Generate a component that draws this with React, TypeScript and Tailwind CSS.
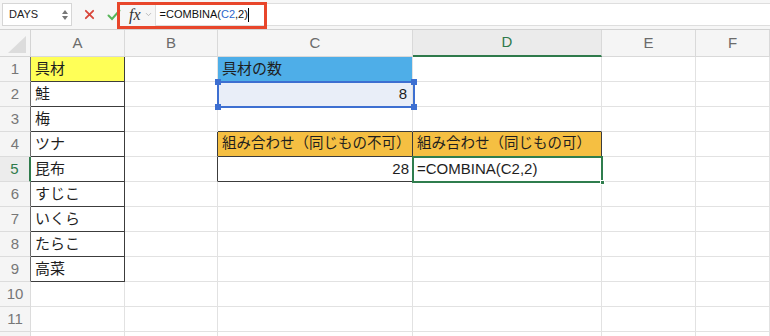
import { ChevronDown } from 'lucide-react'

const FONT = 'font-["Liberation_Sans","Noto_Sans_CJK_JP",sans-serif]'

const COLS = ['A', 'B', 'C', 'D', 'E', 'F']
const ROWS = [1, 2, 3, 4, 5, 6, 7, 8, 9, 10, 11, 12]

type Cell = { text?: string; cls?: string; small?: boolean }

// cell-level overrides: fills, dark borders, alignment
const CELLS: Record<string, Cell> = {
  A1: { text: '具材', cls: 'bg-[#ffff57] border-r-[#3c3c3c] border-b-[#3c3c3c]' },
  A2: { text: '鮭', cls: 'border-r-[#3c3c3c] border-b-[#3c3c3c]' },
  A3: { text: '梅', cls: 'border-r-[#3c3c3c] border-b-[#3c3c3c]' },
  A4: { text: 'ツナ', cls: 'border-r-[#3c3c3c] border-b-[#3c3c3c]' },
  A5: { text: '昆布', cls: 'border-r-[#3c3c3c] border-b-[#3c3c3c]' },
  A6: { text: 'すじこ', cls: 'border-r-[#3c3c3c] border-b-[#3c3c3c]' },
  A7: { text: 'いくら', cls: 'border-r-[#3c3c3c] border-b-[#3c3c3c]' },
  A8: { text: 'たらこ', cls: 'border-r-[#3c3c3c] border-b-[#3c3c3c]' },
  A9: { text: '高菜', cls: 'border-r-[#3c3c3c] border-b-[#3c3c3c]' },
  B4: { cls: 'border-r-[#3c3c3c]' },
  B5: { cls: 'border-r-[#3c3c3c]' },
  C1: { text: '具材の数', cls: 'bg-[#4eaee8]' },
  C2: { text: '8', cls: 'bg-[#e9eef8] justify-end pr-[5px]' },
  C3: { cls: 'border-b-[#3c3c3c]' },
  D3: { cls: 'border-b-[#3c3c3c]' },
  C4: { text: '組み合わせ（同じもの不可）', small: true, cls: 'bg-[#f5bf42] border-r-[#3c3c3c] border-b-[#3c3c3c]' },
  D4: { text: '組み合わせ（同じもの可）', small: true, cls: 'bg-[#f5bf42] border-r-[#3c3c3c] border-b-[#3c3c3c]' },
  C5: { text: '28', cls: 'justify-end pr-[3px] border-r-[#3c3c3c] border-b-[#3c3c3c]' },
  D5: { text: '=COMBINA(C2,2)', cls: 'border-r-[#3c3c3c] border-b-[#3c3c3c]' },
}

function FormulaBar() {
  return (
    <div className="relative h-[30px] bg-[#f6f6f6] border-b border-[#d2d2d2] flex items-center">
      <div className="ml-[2px] w-[70px] h-[23px] bg-white border border-[#d6d6d6] flex items-center justify-between pl-[6px] pr-[3px]">
        <span className="text-[11px] text-[#222]">DAYS</span>
        <span className="flex flex-col gap-[2px]">
          <span className="w-0 h-0 border-x-[3px] border-x-transparent border-b-[4px] border-b-[#777]" />
          <span className="w-0 h-0 border-x-[3px] border-x-transparent border-t-[4px] border-t-[#777]" />
        </span>
      </div>
      <svg className="ml-[12px]" width="11" height="11" viewBox="0 0 12 12">
        <path d="M2 2 L10 10 M10 2 L2 10" stroke="#d9463b" strokeWidth="2" strokeLinecap="round" />
      </svg>
      <svg className="ml-[12px]" width="14" height="12" viewBox="0 0 14 12">
        <path d="M1.5 6.5 L5 10 L12.5 1.5" stroke="#58b55a" strokeWidth="2" fill="none" strokeLinecap="round" />
      </svg>
      <span className="ml-[8px] font-['Liberation_Serif',serif] italic text-[16px] text-[#333] leading-none">fx</span>
      <ChevronDown size={9} className="ml-[3px] text-[#aaa]" />
      <div className="ml-[2px] flex-1 h-[23px] bg-white border-l border-y border-[#dedede] flex items-center pl-[4px] text-[11px] text-[#111]">
        <span>=COMBINA(</span>
        <span className="text-[#2d66cc]">C2</span>
        <span>,2)</span>
        <span className="w-px h-[14px] bg-black" />
      </div>
      <div className="absolute left-[117px] top-[2px] w-[150px] h-[27px] border-[3px] border-[#e8462b]" />
    </div>
  )
}

function Handle({ cls }: { cls: string }) {
  return <div className={`absolute w-[6px] h-[6px] bg-[#3d6fd1] ${cls}`} />
}

export default function App() {
  return (
    <div className={`w-[770px] h-[336px] overflow-hidden bg-white ${FONT}`}>
      <FormulaBar />
      <div className="relative grid grid-cols-[31px_94px_93px_195px_189px_94px_74px] grid-rows-[27px_repeat(12,25px)]">
        {/* header row */}
        <div className="relative bg-[#f5f5f5] border-r border-b border-[#d4d4d4]">
          <svg className="absolute right-[4px] bottom-[3px]" width="18" height="17" viewBox="0 0 18 17">
            <path d="M18 0 L18 17 L0 17 Z" fill="#dcdcdc" />
          </svg>
        </div>
        {COLS.map(c =>
          c === 'D' ? (
            <div
              key={c}
              className="flex items-center justify-center text-[15px] text-[#2f7a4b] bg-[#ebebeb] border-r border-[#d9d9d9] border-b-2 border-b-[#2f7a4b]"
            >
              {c}
            </div>
          ) : (
            <div
              key={c}
              className="flex items-center justify-center text-[15px] text-[#6b6b6b] bg-[#f5f5f5] border-r border-b border-[#d9d9d9]"
            >
              {c}
            </div>
          )
        )}

        {ROWS.map(r => (
          <Row key={r} r={r} />
        ))}

        {/* C2 selection */}
        <div className="absolute left-[217px] top-[51px] w-[198px] h-[27px] border-2 border-[#3d6fd1] pointer-events-none">
          <Handle cls="-left-[4px] -top-[4px]" />
          <Handle cls="-right-[4px] -top-[4px]" />
          <Handle cls="-left-[4px] -bottom-[4px]" />
          <Handle cls="-right-[4px] -bottom-[4px]" />
        </div>

        {/* D5 active cell */}
        <div className="absolute left-[412px] top-[126px] w-[191px] h-[27px] border-2 border-[#2f7d4d] pointer-events-none">
          <div className="absolute -right-[4px] -bottom-[4px] w-[5px] h-[5px] bg-[#2f7d4d] border border-white" />
        </div>
      </div>
    </div>
  )
}

function Row({ r }: { r: number }) {
  const active = r === 5
  const inA = r <= 9
  // row 12 only peeks in at the bottom edge, its number is hidden
  const label = r < 12 ? r : ''
  return (
    <>
      {active ? (
        <div className="flex items-center justify-center text-[15px] text-[#2f7a4b] bg-[#ececec] border-b border-[#dcdcdc] border-r-2 border-r-[#2f7a4b]">
          {label}
        </div>
      ) : (
        <div
          className={`flex items-center justify-center text-[15px] text-[#777] bg-[#f5f5f5] border-b border-r border-[#dcdcdc] ${
            inA ? 'border-r-[#6a6a6a]' : ''
          }`}
        >
          {label}
        </div>
      )}
      {COLS.map(c => {
        const cell = CELLS[`${c}${r}`]
        const size = cell?.small ? 'text-[14.5px]' : 'text-[15px]'
        return (
          <div
            key={c}
            className={`flex items-center pl-[4px] whitespace-nowrap overflow-hidden ${size} text-[#1e1e1e] border-r border-b border-[#e2e2e2] ${cell?.cls ?? ''}`}
          >
            {cell?.text}
          </div>
        )
      })}
    </>
  )
}
